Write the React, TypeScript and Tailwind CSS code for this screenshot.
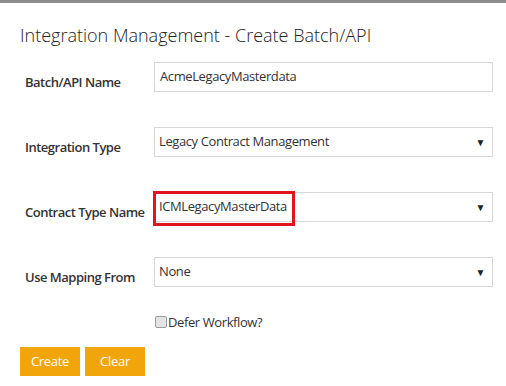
import { useState } from 'react';

const fieldBox =
  'h-[30px] w-[339px] shrink-0 border border-[#d6d6d6] bg-white text-[13px] tracking-[-0.4px] text-[#333]';
const labelCls =
  'w-[134px] shrink-0 whitespace-nowrap pl-[5px] pt-[11px] text-[13px] leading-[19px] font-semibold tracking-[-0.5px] text-[#333]';

function SelectField({ value, highlight }: { value: string; highlight?: boolean }) {
  return (
    <div className={`${fieldBox} relative flex items-center pl-[4px] pr-[7px]`}>
      <span className="flex-1">{value}</span>
      <span className="text-[10px] text-[#222] leading-none">▼</span>
      {highlight && (
        <div className="absolute left-[-2px] top-[-2px] h-[35px] w-[142px] border-[3px] border-[#e3141f]" />
      )}
    </div>
  );
}

export default function App() {
  const [defer, setDefer] = useState(false);

  const rows = [
    { label: 'Integration Type', value: 'Legacy Contract Management' },
    { label: 'Contract Type Name', value: 'ICMLegacyMasterData', highlight: true },
    { label: 'Use Mapping From', value: 'None' },
  ];

  return (
    <div className="w-[506px] h-[386px] bg-white font-['Open_Sans',sans-serif] text-[#333] overflow-hidden">
      {/* top strip */}
      <div className="h-[3px] bg-[#8c8c8c]" />

      <div className="px-5">
        <h1 className="pt-[20px] text-[18px] font-light text-[#222] leading-[24px]">
          Integration Management - Create Batch/API
        </h1>

        {/* Batch/API Name */}
        <div className="mt-[15px] flex h-[30px] items-start">
          <label className={labelCls}>Batch/API Name</label>
          <div className={`${fieldBox} flex items-center pl-[5px]`}>AcmeLegacyMasterdata</div>
        </div>

        {rows.map((r) => (
          <div key={r.label} className="mt-[35px] flex h-[30px] items-start">
            <label className={labelCls}>{r.label}</label>
            <SelectField value={r.value} highlight={r.highlight} />
          </div>
        ))}

        {/* checkbox */}
        <div className="mt-[29px] flex h-[12px] items-center pl-[135px] text-[13px] tracking-[-0.4px]">
          <input
            type="checkbox"
            checked={defer}
            onChange={(e) => setDefer(e.target.checked)}
            className="m-0 h-[12px] w-[12px] appearance-none rounded-[2px] border border-[#9a9a9a] bg-[#e4e4e4]"
          />
          <span className="ml-[1px] leading-[12px]">Defer Workflow?</span>
        </div>

        {/* buttons */}
        <div className="mt-[19px] flex gap-[5px]">
          <button className="h-[29px] w-[60px] bg-[#f2a40b] text-[13px] tracking-[-0.3px] text-white">Create</button>
          <button className="h-[29px] w-[60px] bg-[#f2a40b] text-[13px] tracking-[-0.3px] text-white">Clear</button>
        </div>
      </div>
    </div>
  );
}
